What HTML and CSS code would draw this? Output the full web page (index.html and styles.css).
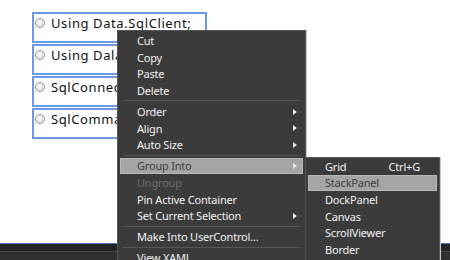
FILE: index.html
```html
<!DOCTYPE html>
<html lang="en">
<head>
    <meta charset="UTF-8">
    <title>Designer - Group Into</title>
    <link rel="stylesheet" href="styles.css">
</head>
<body>
    <div class="surface">
        <div class="stack">
            <div class="item"><span class="radio"></span>Using Data.SqlClient;</div>
            <div class="item"><span class="radio"></span>Using Dala.OleDb;</div>
            <div class="item"><span class="radio"></span>SqlConnection</div>
            <div class="item"><span class="radio"></span>SqlCommand</div>
        </div>
    </div>
    <div class="statusbar"></div>

    <!-- context menu -->
    <div class="menu main-menu">
        <div class="row">Cut</div>
        <div class="row">Copy</div>
        <div class="row">Paste</div>
        <div class="row">Delete</div>
        <div class="sep"></div>
        <div class="row">Order<span class="arrow"></span></div>
        <div class="row">Align<span class="arrow"></span></div>
        <div class="row">Auto Size<span class="arrow"></span></div>
        <div class="sep"></div>
        <div class="row active">Group Into<span class="arrow"></span></div>
        <div class="row disabled">Ungroup</div>
        <div class="row">Pin Active Container</div>
        <div class="row">Set Current Selection<span class="arrow"></span></div>
        <div class="sep"></div>
        <div class="row">Make Into UserControl...</div>
        <div class="sep"></div>
        <div class="row">View XAML</div>
    </div>

    <div class="menu sub-menu">
        <div class="row">Grid<span class="shortcut">Ctrl+G</span></div>
        <div class="row active">StackPanel</div>
        <div class="row">DockPanel</div>
        <div class="row">Canvas</div>
        <div class="row">ScrollViewer</div>
        <div class="row">Border</div>
    </div>
</body>
</html>
```

FILE: styles.css
```css
:root {
    --selection-blue: #6c99e6;
    --menu-bg: #3b3b3b;
    --menu-border: #555;
    --menu-text: #f2f2f2;
    --highlight-bg: #a5a5a5;
}

body {
    margin: 0;
    width: 450px;
    height: 260px;
    overflow: hidden;
    position: relative;
    background: #fff;
    font-family: "Noto Sans", "Open Sans", sans-serif;
}

.surface {
    height: 231px;
    padding: 12px 0 0 32px;
    background: #fff;
}

.stack {
    width: 175px;
    display: flex;
    flex-direction: column;
    gap: 1px;
}

.item {
    height: 26px;
    border: 2px solid var(--selection-blue);
    padding: 1px 0 0 1px;
    display: flex;
    align-items: flex-start;
    font-size: 13px;
    letter-spacing: 0.6px;
    line-height: 16px;
    color: #111;
    white-space: nowrap;
    overflow: hidden;
}

.radio {
    flex: none;
    width: 8px;
    height: 8px;
    margin: 3px 6px 0 0;
    border: 1px solid #9a9a9a;
    border-radius: 50%;
    background: radial-gradient(circle at 40% 35%, #fafafa, #d2d2d2);
}

.statusbar {
    height: 16px;
    border-top: 1px solid #5076c4;
    background: linear-gradient(#232323 0, #232323 7px, #454545 7px, #454545 8px, #2f2f2f 8px);
}

.menu {
    position: absolute;
    background: var(--menu-bg);
    border: 1px solid var(--menu-border);
    box-shadow: 1px 0 0 #c8c8c8;
    color: var(--menu-text);
    font-size: 11px;
    letter-spacing: -0.2px;
    padding-top: 1.4px;
    height: 300px;
}

.main-menu {
    left: 117px;
    top: 30px;
    width: 187px;
}

.sub-menu {
    left: 305px;
    top: 157px;
    width: 133px;
    padding-top: 0;
}

.row {
    height: 14.6px;
    margin: 0 2px;
    border: 1px solid transparent;
    padding: 0 5px 0 16px;
    display: flex;
    align-items: center;
    white-space: nowrap;
}

.row.active {
    background: var(--highlight-bg);
    border-color: #b8b8b8;
    color: #3d3d3d;
}

.row.disabled {
    color: #6f6f6f;
}

.arrow {
    margin-left: auto;
    width: 0;
    height: 0;
    border-left: 4px solid #e6e6e6;
    border-top: 3.5px solid transparent;
    border-bottom: 3.5px solid transparent;
}

.shortcut {
    margin-left: auto;
    padding-right: 11px;
}

.sep {
    height: 1px;
    margin: 1.7px 5px 1.8px 5px;
    background: #575757;
}
```
